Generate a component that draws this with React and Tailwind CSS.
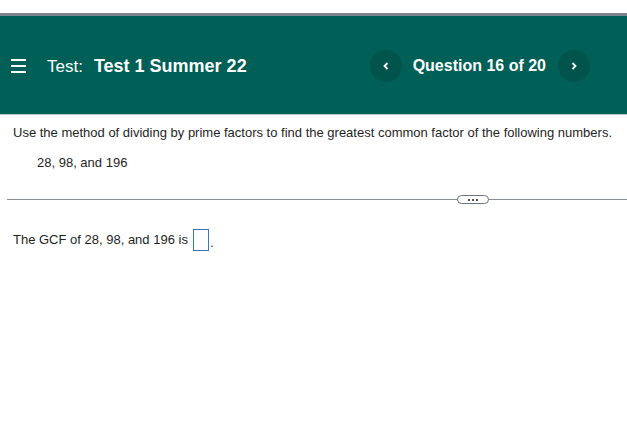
import React from "react";

export default function App() {
    return (
        <div className="w-[627px] h-[429px] bg-white font-['Liberation_Sans',Arial,sans-serif] text-[#1f1f1f]">
            <div className="h-[13px] bg-white" />
            <div className="h-[3px] bg-[#7d848c]" />
            <header className="h-[99px] bg-[#005f56] flex items-center justify-between pr-[37px] border-b border-[#b9c4c9]">
                <div className="flex items-center pt-[2px]">
                    <button className="ml-[11px] w-[15px] flex flex-col gap-[4.5px]">
                        <span className="h-[1.5px] w-full bg-white" />
                        <span className="h-[1.5px] w-full bg-white" />
                        <span className="h-[1.5px] w-full bg-white" />
                    </button>
                    <div className="ml-[21px] text-white text-[17px]">
                        Test:
                        <span className="ml-[11px] font-bold text-[18px]">Test 1 Summer 22</span>
                    </div>
                </div>
                <div className="flex items-center pt-[2px]">
                    <button className="w-[32px] h-[32px] rounded-full bg-[#00544c] text-white flex items-center justify-center">
                        <svg width="8" height="10" viewBox="0 0 8 10">
                            <path d="M5.5 2 L2.5 5 L5.5 8" fill="none" stroke="white" strokeWidth="1.8" />
                        </svg>
                    </button>
                    <span className="ml-[11px] mr-[12px] text-white font-bold text-[16px]">
                        Question 16 of 20
                    </span>
                    <button className="w-[32px] h-[32px] rounded-full bg-[#00544c] text-white flex items-center justify-center">
                        <svg width="8" height="10" viewBox="0 0 8 10">
                            <path d="M2.5 2 L5.5 5 L2.5 8" fill="none" stroke="white" strokeWidth="1.8" />
                        </svg>
                    </button>
                </div>
            </header>
            <div className="pt-[10px] text-[13px]">
                <p className="px-[13px] leading-[16px]">
                    Use the method of dividing by prime factors to find the greatest common factor of the following numbers.
                </p>
                <p className="mt-[14px] pl-[37px] leading-[16px]">28, 98, and 196</p>
                <div className="mt-[28px] ml-[7px] relative h-[1px] bg-[#878c96]">
                    <div className="absolute left-[450px] top-[-4px] w-[32px] h-[9px] rounded-full border border-[#6c7480] bg-white flex items-center justify-center gap-[2px]">
                        <span className="w-[2px] h-[2px] bg-[#4b525c]" />
                        <span className="w-[2px] h-[2px] bg-[#4b525c]" />
                        <span className="w-[2px] h-[2px] bg-[#4b525c]" />
                    </div>
                </div>
                <div className="mt-[29px] px-[13px] flex items-center leading-[16px]">
                    <span>The GCF of 28, 98, and 196 is</span>
                    <span className="ml-[5px] inline-block w-[16px] h-[22px] border border-[#3b73c4]" />
                    <span className="ml-[1px] self-end">.</span>
                </div>
            </div>
        </div>
    );
}
